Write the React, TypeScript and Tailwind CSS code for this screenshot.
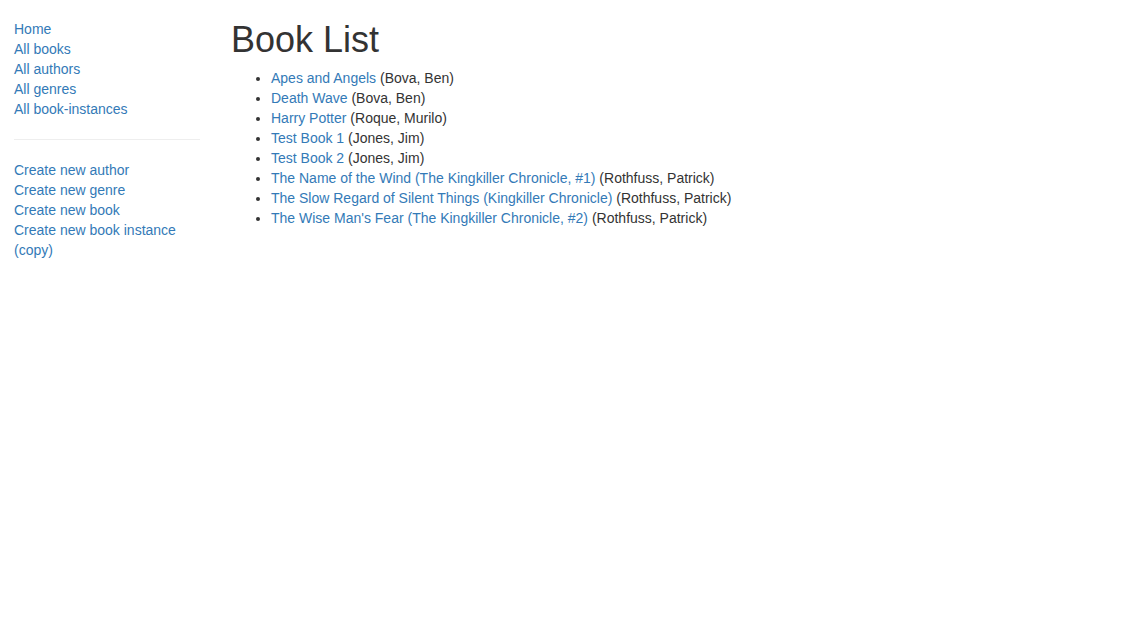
const navLinks = ['Home', 'All books', 'All authors', 'All genres', 'All book-instances']
const createLinks = ['Create new author', 'Create new genre', 'Create new book', 'Create new book instance (copy)']

const books = [
  { title: 'Apes and Angels', author: 'Bova, Ben' },
  { title: 'Death Wave', author: 'Bova, Ben' },
  { title: 'Harry Potter', author: 'Roque, Murilo' },
  { title: 'Test Book 1', author: 'Jones, Jim' },
  { title: 'Test Book 2', author: 'Jones, Jim' },
  { title: 'The Name of the Wind (The Kingkiller Chronicle, #1)', author: 'Rothfuss, Patrick' },
  { title: 'The Slow Regard of Silent Things (Kingkiller Chronicle)', author: 'Rothfuss, Patrick' },
  { title: "The Wise Man's Fear (The Kingkiller Chronicle, #2)", author: 'Rothfuss, Patrick' },
]

export default function App() {
  return (
    <div className="min-h-screen bg-white text-[14px] leading-[20px] text-[#333] font-['Liberation_Sans',Arial,sans-serif]">
      <div className="flex">
        {/* Sidebar */}
        <div className="w-[200px] shrink-0 pl-[14px] pt-[19px]">
          <ul className="w-[186px]">
            {navLinks.map((l) => (
              <li key={l}>
                <a href="#" className="text-[#337ab7]">{l}</a>
              </li>
            ))}
          </ul>
          <hr className="w-[186px] my-[20px] border-t border-[#eee]" />
          <ul className="w-[186px]">
            {createLinks.map((l) => (
              <li key={l}>
                <a href="#" className="text-[#337ab7]">{l}</a>
              </li>
            ))}
          </ul>
        </div>

        {/* Main */}
        <div className="pl-[31px]">
          <h1 className="mt-[20px] mb-[8px] text-[36px] leading-[1.1] font-normal text-[#333]">Book List</h1>
          <ul className="list-disc pl-[40px]">
            {books.map((b) => (
              <li key={b.title}>
                <a href="#" className="text-[#337ab7]">{b.title}</a> ({b.author})
              </li>
            ))}
          </ul>
        </div>
      </div>
    </div>
  )
}
